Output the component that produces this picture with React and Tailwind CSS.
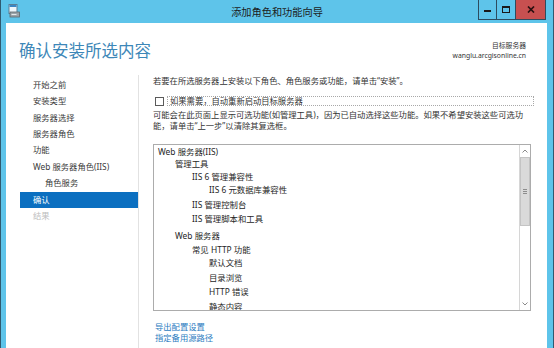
import React from 'react'

const NAV = [
  { label: '开始之前' },
  { label: '安装类型' },
  { label: '服务器选择' },
  { label: '服务器角色' },
  { label: '功能' },
  { label: 'Web 服务器角色(IIS)' },
  { label: '角色服务', sub: true },
  { label: '确认', active: true },
  { label: '结果', disabled: true },
]

// indent level + extra top gap, tuned to the reference rows
const TREE = [
  { text: 'Web 服务器(IIS)', pad: 'pl-[4px]', gap: '' },
  { text: '管理工具', pad: 'pl-[21px]', gap: '' },
  { text: 'IIS 6 管理兼容性', pad: 'pl-[38px]', gap: 'mt-[1px]' },
  { text: 'IIS 6 元数据库兼容性', pad: 'pl-[55px]', gap: 'mt-[1px]' },
  { text: 'IIS 管理控制台', pad: 'pl-[38px]', gap: 'mt-[3px]' },
  { text: 'IIS 管理脚本和工具', pad: 'pl-[38px]', gap: 'mt-[2px]' },
  { text: 'Web 服务器', pad: 'pl-[21px]', gap: 'mt-[5px]' },
  { text: '常见 HTTP 功能', pad: 'pl-[38px]', gap: 'mt-[2px]' },
  { text: '默认文档', pad: 'pl-[55px]', gap: 'mt-[1px]' },
  { text: '目录浏览', pad: 'pl-[55px]', gap: 'mt-[3px]' },
  { text: 'HTTP 错误', pad: 'pl-[55px]', gap: 'mt-[2px]' },
  { text: '静态内容', pad: 'pl-[55px]', gap: 'mt-[3px]' },
]

function TitleBar() {
  return (
    <div className="h-[23px] grid grid-cols-[1fr_auto_1fr] items-start">
      <div className="pl-[7px] pt-[4px]">
        <svg width="12" height="14" viewBox="0 0 12 14">
          <rect x="1" y="0.5" width="8" height="9" fill="#eef6fb" stroke="#5a7f96" strokeWidth="1" />
          <rect x="1.5" y="1" width="7" height="2" fill="#3a86c4" />
          <rect x="2" y="8" width="9.5" height="5" fill="#9aa3a9" stroke="#5c666d" strokeWidth="0.8" />
          <rect x="3.5" y="10" width="5" height="1" fill="#e4e8ea" />
        </svg>
      </div>
      <div className="pt-[4px] text-[10.2px] leading-[16px] text-[#1c1c1c]">添加角色和功能向导</div>
      <div className="flex justify-end pr-[7px]">
        <div className="flex h-[20px] border border-t-0 border-[#2d4c5f]">
          <div className="w-[18px] flex items-center justify-center border-r border-[#2d4c5f]">
            <div className="w-[7px] h-[2px] mt-[2px] bg-[#1a1a1a]" />
          </div>
          <div className="w-[19px] flex items-center justify-center border-r border-[#2d4c5f]">
            <div className="w-[8px] h-[7px] border border-t-2 border-[#1a1a1a]" />
          </div>
          <div className="w-[29px] flex items-center justify-center bg-[#c75050]">
            <svg width="8" height="7" viewBox="0 0 8 7">
              <path d="M1 0.5 L7 6.5 M7 0.5 L1 6.5" stroke="#2a1010" strokeWidth="1.7" />
            </svg>
          </div>
        </div>
      </div>
    </div>
  )
}

function Nav() {
  return (
    <div className="w-[133px] shrink-0 border-r border-[#e2e2e2] pl-[14px] pt-[1.8px]">
      {NAV.map((n) => (
        <div
          key={n.label}
          className={
            'h-[16.4px] flex items-center text-[8.3px] ' +
            (n.sub ? 'pl-[25px] ' : 'pl-[13px] ') +
            (n.active ? 'bg-[#0b6fc0] text-white' : n.disabled ? 'text-[#bdbdbd]' : 'text-[#3a3a3a]')
          }
        >
          {n.label}
        </div>
      ))}
    </div>
  )
}

function ListBox() {
  return (
    <div className="h-[167px] w-[378px] border border-[#acacac] bg-white flex overflow-hidden">
      <div className="flex-1 pt-[1.7px] overflow-hidden">
        {TREE.map((t) => (
          <div key={t.text} className={'h-[12px] leading-[12px] text-[8.4px] text-[#262626] whitespace-nowrap ' + t.pad + ' ' + t.gap}>
            {t.text}
          </div>
        ))}
      </div>
      <div className="w-[11px] border-l border-[#d6d6d6] flex flex-col">
        <div className="h-[12px] flex items-center justify-center">
          <svg width="6" height="4" viewBox="0 0 6 4">
            <path d="M0.5 3.5 L3 1 L5.5 3.5" fill="none" stroke="#8a8a8a" strokeWidth="1" />
          </svg>
        </div>
        <div className="h-[69px] bg-[#dadada] border border-[#c4c4c4] flex items-center justify-center">
          <div className="flex flex-col gap-[1px]">
            <div className="w-[4px] h-[1px] bg-[#8d8d8d]" />
            <div className="w-[4px] h-[1px] bg-[#8d8d8d]" />
            <div className="w-[4px] h-[1px] bg-[#8d8d8d]" />
          </div>
        </div>
        <div className="flex-1" />
        <div className="h-[12px] flex items-center justify-center">
          <svg width="6" height="4" viewBox="0 0 6 4">
            <path d="M0.5 0.5 L3 3 L5.5 0.5" fill="none" stroke="#8a8a8a" strokeWidth="1" />
          </svg>
        </div>
      </div>
    </div>
  )
}

export default function App() {
  return (
    <div className="w-[554px] h-[348px] overflow-hidden flex flex-col bg-[#5ec4ea] border-x border-[#2f5a70] font-['Noto_Sans','Noto_Sans_CJK_SC',sans-serif]">
      <TitleBar />
      <div className="flex-1 ml-[5px] mr-[6px] bg-white flex flex-col">
        {/* header */}
        <div className="h-[52px] flex justify-between">
          <div className="pl-[13px] pt-[17px] text-[16.5px] leading-[22px] text-[#3d87b8]">确认安装所选内容</div>
          <div className="pr-[21px] pt-[18px] text-right text-[6.8px] leading-[9.5px] text-[#333]">
            <div>目标服务器</div>
            <div>wanglu.arcgisonline.cn</div>
          </div>
        </div>

        <div className="flex-1 flex">
          <Nav />
          <div className="flex-1 pl-[14px] text-[8.3px] text-[#333]">
            <div className="leading-[11px]">若要在所选服务器上安装以下角色、角色服务或功能，请单击“安装”。</div>
            <div className="mt-[10px] h-[10px] flex items-center">
              <div className="ml-[2px] w-[9px] h-[9px] border border-[#5a5a5a] bg-white" />
              <div className="ml-[3px] w-[367px] h-[10px] border border-dotted border-[#a8a8a8] pl-[2px] leading-[8px]">
                如果需要，自动重新启动目标服务器
              </div>
            </div>
            <div className="mt-[3px] leading-[11px]">
              可能会在此页面上显示可选功能(如管理工具)，因为已自动选择这些功能。如果不希望安装这些可选功
              <br />
              能，请单击“上一步”以清除其复选框。
            </div>
            <div className="mt-[12.5px]">
              <ListBox />
            </div>
            <div className="mt-[10.5px] pl-[2px] leading-[11px] text-[#2c7dbf]">
              <div>导出配置设置</div>
              <div>指定备用源路径</div>
            </div>
          </div>
        </div>
      </div>
    </div>
  )
}
